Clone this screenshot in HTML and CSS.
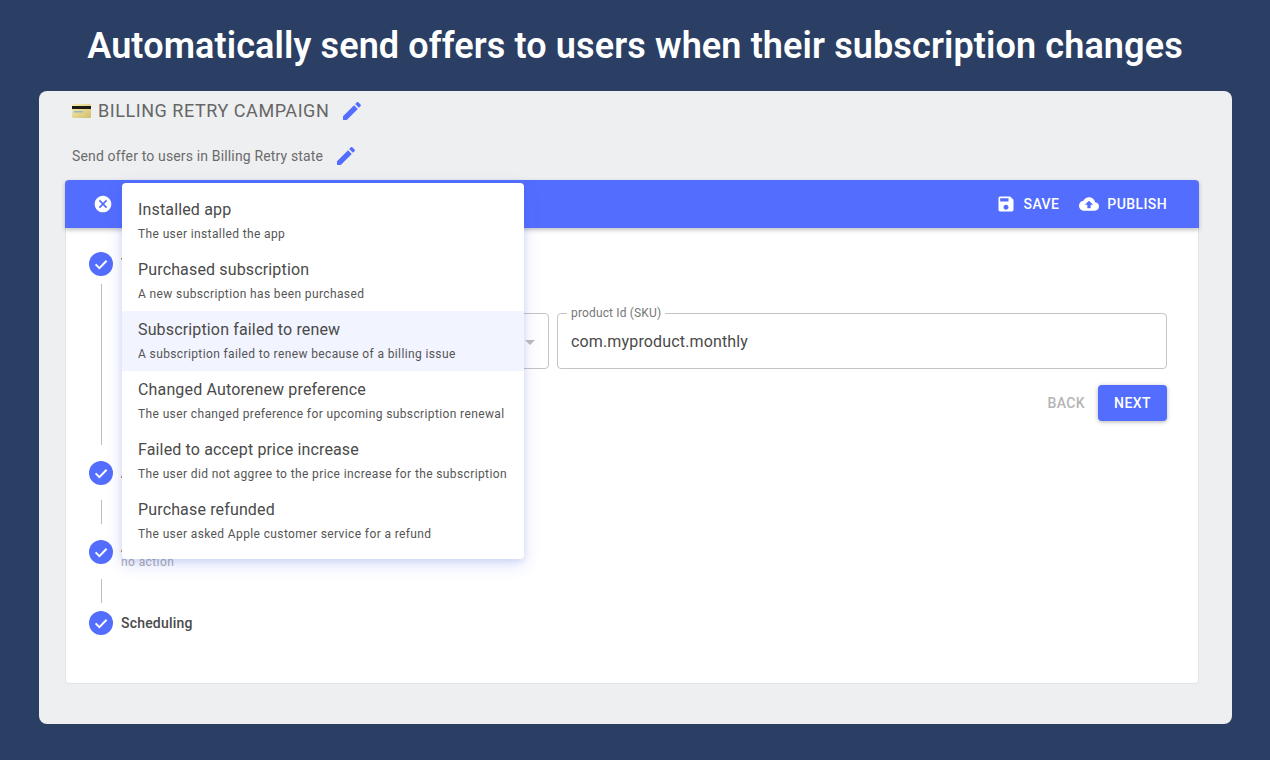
FILE: index.html
```html
<!DOCTYPE html>
<html lang="en">
<head>
<meta charset="utf-8">
<title>Billing Retry Campaign</title>
<link rel="stylesheet" href="styles.css">
</head>
<body>
<h1 class="headline">Automatically send offers to users when their subscription changes</h1>
<main class="panel">
  <div class="title-row">
    <svg class="card-emoji" viewBox="0 0 19 14" aria-hidden="true">
      <defs><linearGradient id="gold" x1="0" y1="0" x2="1" y2="1"><stop offset="0" stop-color="#f6eeb4"/><stop offset="1" stop-color="#d3bd6c"/></linearGradient></defs>
      <rect width="19" height="14" rx="1" fill="url(#gold)"/>
      <rect y="2" width="19" height="3" fill="#1e1c14"/>
      <rect x="2" y="7" width="9" height="1.5" fill="#9fb4c0"/>
    </svg>
    <span class="title">BILLING RETRY CAMPAIGN</span>
    <svg class="edit" viewBox="0 0 24 24" aria-hidden="true"><path d="M3 17.25V21h3.75L17.81 9.94l-3.75-3.75L3 17.25zM20.71 7.04c.39-.39.39-1.02 0-1.41l-2.34-2.34c-.39-.39-1.02-.39-1.41 0l-1.83 1.83 3.75 3.75 1.83-1.83z"/></svg>
  </div>
  <div class="sub-row">
    <span class="subtitle">Send offer to users in Billing Retry state</span>
    <svg class="edit" viewBox="0 0 24 24" aria-hidden="true"><path d="M3 17.25V21h3.75L17.81 9.94l-3.75-3.75L3 17.25zM20.71 7.04c.39-.39.39-1.02 0-1.41l-2.34-2.34c-.39-.39-1.02-.39-1.41 0l-1.83 1.83 3.75 3.75 1.83-1.83z"/></svg>
  </div>

  <section class="card">
    <header class="toolbar">
      <svg class="close" viewBox="0 0 24 24" aria-hidden="true"><path d="M12 2C6.47 2 2 6.47 2 12s4.47 10 10 10 10-4.47 10-10S17.53 2 12 2zm5 13.59L15.59 17 12 13.41 8.41 17 7 15.59 10.59 12 7 8.41 8.41 7 12 10.59 15.59 7 17 8.41 13.41 12 17 15.59z"/></svg>
      <div class="actions">
        <span class="action">
          <svg class="action-icon" viewBox="0 0 24 24" aria-hidden="true"><path d="M17 3H5c-1.11 0-2 .9-2 2v14c0 1.1.89 2 2 2h14c1.1 0 2-.9 2-2V7l-4-4zm-5 16c-1.66 0-3-1.34-3-3s1.34-3 3-3 3 1.34 3 3-1.34 3-3 3zm3-10H5V5h10v4z"/></svg>SAVE
        </span>
        <span class="action">
          <svg class="action-icon" viewBox="0 0 24 24" aria-hidden="true"><path d="M19.35 10.04C18.67 6.59 15.64 4 12 4 9.11 4 6.6 5.64 5.35 8.04 2.34 8.36 0 10.91 0 14c0 3.31 2.69 6 6 6h13c2.76 0 5-2.24 5-5 0-2.64-2.05-4.78-4.65-4.96zM14 13v4h-4v-4H7l5-5 5 5h-3z"/></svg>PUBLISH
        </span>
      </div>
    </header>

    <div class="stepper">
      <div class="step-head">
        <svg class="step-icon" viewBox="0 0 24 24" aria-hidden="true"><circle cx="12" cy="12" r="12"/><path class="tick" d="M6.6 12.4l3.8 3.7 7.2-7.4"/></svg>
        <span class="step-label">Trigger</span>
      </div>
      <div class="step-content">
        <div class="fields">
          <div class="field field-select">
            <svg class="arrow" viewBox="0 0 10 5" aria-hidden="true"><path d="M0 0h10L5 5z"/></svg>
          </div>
          <div class="field field-text">
            <span class="field-label">product Id (SKU)</span>
            <span class="field-value">com.myproduct.monthly</span>
          </div>
        </div>
        <div class="nav">
          <span class="back">BACK</span>
          <span class="next">NEXT</span>
        </div>
      </div>

      <div class="step-head">
        <svg class="step-icon" viewBox="0 0 24 24" aria-hidden="true"><circle cx="12" cy="12" r="12"/><path class="tick" d="M6.6 12.4l3.8 3.7 7.2-7.4"/></svg>
        <span class="step-label">Audience</span>
      </div>
      <div class="connector"></div>

      <div class="step-head">
        <svg class="step-icon" viewBox="0 0 24 24" aria-hidden="true"><circle cx="12" cy="12" r="12"/><path class="tick" d="M6.6 12.4l3.8 3.7 7.2-7.4"/></svg>
        <span class="step-text">
          <span class="step-label">Action</span>
          <span class="step-note">no action</span>
        </span>
      </div>
      <div class="connector connector-tight"></div>

      <div class="step-head">
        <svg class="step-icon" viewBox="0 0 24 24" aria-hidden="true"><circle cx="12" cy="12" r="12"/><path class="tick" d="M6.6 12.4l3.8 3.7 7.2-7.4"/></svg>
        <span class="step-label">Scheduling</span>
      </div>
    </div>

    <ul class="menu">
      <li class="menu-item"><span class="item-title">Installed app</span><span class="item-desc">The user installed the app</span></li>
      <li class="menu-item"><span class="item-title">Purchased subscription</span><span class="item-desc">A new subscription has been purchased</span></li>
      <li class="menu-item menu-item-active"><span class="item-title">Subscription failed to renew</span><span class="item-desc">A subscription failed to renew because of a billing issue</span></li>
      <li class="menu-item"><span class="item-title">Changed Autorenew preference</span><span class="item-desc">The user changed preference for upcoming subscription renewal</span></li>
      <li class="menu-item"><span class="item-title">Failed to accept price increase</span><span class="item-desc">The user did not aggree to the price increase for the subscription</span></li>
      <li class="menu-item"><span class="item-title">Purchase refunded</span><span class="item-desc">The user asked Apple customer service for a refund</span></li>
    </ul>
  </section>
</main>
</body>
</html>
```

FILE: styles.css
```css
* { box-sizing: border-box; }

html, body { margin: 0; height: 760px; overflow: hidden; }

body {
  background: #2a3f63;
  font-family: Roboto, "Liberation Sans", sans-serif;
  color: #4a4a4a;
  display: flex;
  flex-direction: column;
  align-items: flex-start;
}

.headline {
  width: 100%;
  height: 91px;
  margin: 0;
  display: flex;
  align-items: center;
  justify-content: center;
  color: #fff;
  font-size: 36px;
  font-weight: 600;
  letter-spacing: .12px;
}

.panel {
  width: 1193px;
  height: 633px;
  margin-left: 39px;
  padding: 0 33px 0 26px;
  background: #eeeff1;
  border-radius: 8px;
}

.title-row, .sub-row {
  display: flex;
  align-items: center;
  padding-left: 7px;
}

.title-row { height: 40px; }

.sub-row { height: 40px; margin-top: 5px; margin-bottom: 4px; }

.card-emoji { width: 19px; height: 14px; margin-right: 7px; }

.title {
  font-size: 18px;
  font-weight: 400;
  color: #666;
  letter-spacing: .55px;
  padding-bottom: 1px;
}

.subtitle { font-size: 14px; color: #6b6b6b; letter-spacing: .15px; }

.edit { width: 24px; height: 24px; fill: #536dfe; margin-left: 11px; }

.card {
  position: relative;
  height: 504px;
  background: #fff;
  border: 1px solid #e2e3e5;
  border-top: 0;
  border-radius: 4px;
}

.toolbar {
  height: 48px;
  margin: 0 -1px;
  padding: 0 32px 0 28px;
  display: flex;
  align-items: center;
  justify-content: space-between;
  background: #536dfe;
  border-radius: 4px 4px 0 0;
  box-shadow: 0 2px 4px rgba(0, 0, 0, .25);
}

.close { width: 20px; height: 20px; fill: #fff; }

.actions { display: flex; gap: 20px; }

.action {
  display: flex;
  align-items: center;
  gap: 8px;
  color: #fff;
  font-size: 14px;
  font-weight: 500;
  letter-spacing: .4px;
}

.action-icon { width: 20px; height: 20px; fill: #fff; }

.stepper { padding: 24px 31px 0 23px; }

.step-head {
  display: flex;
  align-items: center;
  height: 24px;
  gap: 8px;
}

.step-icon { width: 24px; height: 24px; flex: none; fill: #536dfe; }

.tick { fill: none; stroke: #fff; stroke-width: 2; }

.step-label { font-size: 14px; font-weight: 500; color: #4a4a4a; letter-spacing: .2px; }

.step-text { display: flex; flex-direction: column; padding-top: 3px; }

.step-note { font-size: 12px; color: #aaa; letter-spacing: .4px; }

.step-content {
  height: 161px;
  margin: 8px 0 16px 12px;
  padding: 29px 0 0 19px;
  border-left: 1px solid #bdbdbd;
}

.fields { display: flex; gap: 8px; }

.field {
  position: relative;
  height: 56px;
  border: 1px solid #c4c4c4;
  border-radius: 4px;
}

.field-select { width: 426px; margin-left: 2px; }

.arrow {
  position: absolute;
  right: 13px;
  top: 26px;
  width: 10px;
  height: 5px;
  fill: #bdbdbd;
}

.field-text {
  flex: 1;
  display: flex;
  align-items: center;
  padding: 0 13px;
}

.field-label {
  position: absolute;
  top: -7px;
  left: 9px;
  padding: 0 4px;
  background: #fff;
  font-size: 12px;
  line-height: 13px;
  color: #777;
  letter-spacing: .15px;
}

.field-value { font-size: 16px; color: #4a4a4a; letter-spacing: .15px; }

.nav {
  display: flex;
  justify-content: flex-end;
  align-items: center;
  gap: 13px;
  margin-top: 16px;
}

.back { font-size: 14px; font-weight: 500; color: #b5b5b5; letter-spacing: .4px; }

.next {
  width: 69px;
  height: 36px;
  display: flex;
  align-items: center;
  justify-content: center;
  background: #536dfe;
  border-radius: 4px;
  color: #fff;
  font-size: 14px;
  font-weight: 500;
  letter-spacing: .4px;
  box-shadow: 0 1px 4px rgba(0, 0, 0, .3);
}

.connector {
  height: 24px;
  margin: 15px 0 16px 12px;
  border-left: 1px solid #bdbdbd;
}

.connector-tight { margin-bottom: 8px; }

.menu {
  position: absolute;
  left: 56px;
  top: 3px;
  width: 402px;
  margin: 0;
  padding: 8px 0;
  list-style: none;
  background: #fff;
  border-radius: 4px;
  box-shadow: 0 5px 16px rgba(83, 109, 254, .22), 0 2px 6px rgba(60, 70, 120, .12);
}

.menu-item {
  height: 60px;
  padding: 8px 0 0 16px;
  display: flex;
  flex-direction: column;
  white-space: nowrap;
}

.menu-item-active { background: #f2f4ff; }

.item-title { font-size: 16px; line-height: 20px; color: #4a4a4a; letter-spacing: .15px; padding-top: 1px; }

.item-desc { margin-top: 6px; font-size: 12px; line-height: 16px; color: #555; letter-spacing: .38px; }
```
